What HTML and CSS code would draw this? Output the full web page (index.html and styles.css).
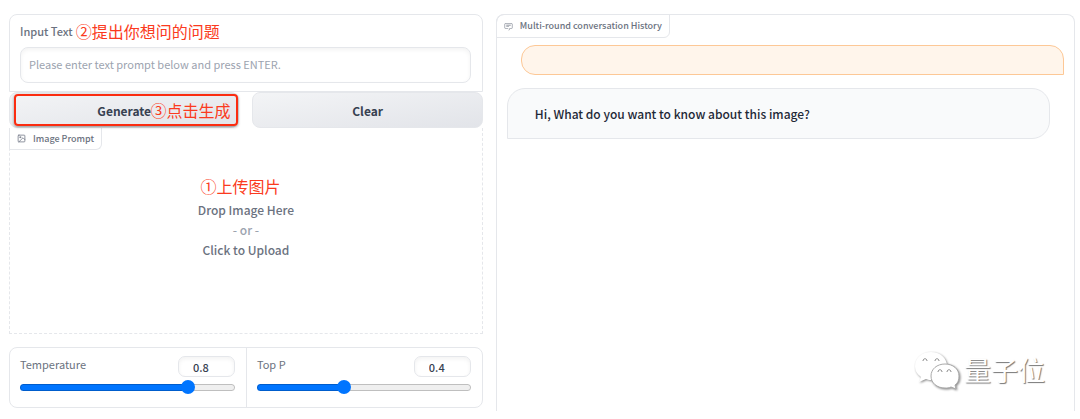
FILE: index.html
```html
<!DOCTYPE html>
<html lang="en">
<head>
    <meta charset="UTF-8">
    <meta name="viewport" content="width=device-width, initial-scale=1.0">
    <title>Image Chat</title>
    <link rel="stylesheet" href="styles.css">
</head>
<body>
    <main class="app">
        <div class="controls">
            <div class="text-panel">
                <div class="label-row">
                    <label for="prompt">Input Text</label>
                    <span class="note" lang="zh-CN">②提出你想问的问题</span>
                </div>
                <input type="text" id="prompt" class="prompt" placeholder="Please enter text prompt below and press ENTER.">
            </div>

            <div class="buttons">
                <div class="generate">
                    <button type="button">Generate</button>
                    <div class="highlight"><span class="note" lang="zh-CN">③点击生成</span></div>
                </div>
                <button type="button">Clear</button>
            </div>

            <div class="upload">
                <div class="tag upload-tag">
                    <svg class="tag-icon" viewBox="0 0 24 24" fill="none" stroke="currentColor" stroke-width="2" stroke-linecap="round" stroke-linejoin="round">
                        <rect x="3" y="3" width="18" height="18" rx="2"/>
                        <circle cx="8.5" cy="8.5" r="1.5"/>
                        <path d="M21 15l-5-5L5 21"/>
                    </svg>
                    Image Prompt
                </div>
                <button type="button" class="drop">
                    <span class="note" lang="zh-CN">①上传图片</span>
                    <span>Drop Image Here</span>
                    <span class="or">- or -</span>
                    <span>Click to Upload</span>
                </button>
            </div>

            <div class="sliders">
                <div class="slider">
                    <div class="slider-head">
                        <label for="temperature">Temperature</label>
                        <input type="text" inputmode="decimal" class="number" value="0.8" aria-label="Temperature value">
                    </div>
                    <input type="range" id="temperature" min="0" max="1" step="0.1" value="0.8" style="--value: 80%">
                </div>
                <div class="slider">
                    <div class="slider-head">
                        <label for="top-p">Top P</label>
                        <input type="text" inputmode="decimal" class="number" value="0.4" aria-label="Top P value">
                    </div>
                    <input type="range" id="top-p" min="0" max="1" step="0.1" value="0.4" style="--value: 40%">
                </div>
            </div>
        </div>

        <div class="chat">
            <div class="tag chat-tag">
                <svg class="tag-icon" viewBox="0 0 32 32" fill="currentColor">
                    <path d="M17.74 30L16 29l4-7h6a2 2 0 0 0 2-2V8a2 2 0 0 0-2-2H6a2 2 0 0 0-2 2v12a2 2 0 0 0 2 2h9v2H6a4 4 0 0 1-4-4V8a4 4 0 0 1 4-4h20a4 4 0 0 1 4 4v12a4 4 0 0 1-4 4h-4.84z"/>
                    <path d="M8 10h16v2H8zM8 16h10v2H8z"/>
                </svg>
                Multi-round conversation History
            </div>
            <div class="messages">
                <div class="message user"></div>
                <div class="message bot">Hi, What do you want to know about this image?</div>
            </div>
        </div>
    </main>

    <div class="watermark" lang="zh-CN">
        <svg class="watermark-icon" viewBox="0 0 46 40" fill="#fff">
            <path d="M17 2C8 2 1 8 1 16c0 5 2 8 6 11l-2 5 7-3c2 1 4 1 6 1 8 0 15-6 15-14S26 2 17 2z"/>
            <path class="front-bubble" d="M31 14c-8 0-14 5-14 12s6 12 14 12c2 0 4 0 6-1l5 2-1-4c3-2 4-5 4-9 0-7-6-12-14-12z"/>
            <path class="eyes" d="M9 11c0-3 4-3 4 0M21 11c0-3 4-3 4 0M24 22c0-3 4-3 4 0M33 22c0-3 4-3 4 0"/>
        </svg>
        量子位
    </div>

    <script>
        document.querySelectorAll('.slider').forEach((slider) => {
            const range = slider.querySelector('input[type="range"]');
            const number = slider.querySelector('.number');
            range.addEventListener('input', () => {
                number.value = range.value;
                range.style.setProperty('--value', range.value * 100 + '%');
            });
        });
    </script>
</body>
</html>
```
FILE: styles.css
```css
* {
    box-sizing: border-box;
}
body {
    margin: 0;
    background: white;
    color: #6b7280;
    font-family: "Noto Sans CJK SC", "Open Sans", sans-serif;
    font-size: 12px;
    font-weight: 500;
    line-height: 16px;
}
button, input {
    font-family: inherit;
    font-weight: inherit;
    margin: 0;
}
.app {
    display: grid;
    grid-template-columns: 9fr 11fr;
    gap: 13px;
    min-height: 100vh;
    padding: 14px 5px 8px 9px;
}
.controls {
    display: flex;
    flex-direction: column;
}
.text-panel {
    border: 1px solid #e5e7eb;
    border-radius: 8px 8px 0 0;
    padding: 8px 11px 8px 10px;
}
.label-row {
    display: flex;
    align-items: center;
    gap: 3px;
    height: 16px;
    margin-bottom: 8px;
    font-size: 11px;
}
.note {
    color: #fb3a20;
    font-size: 16px;
    font-weight: 400;
    line-height: 20px;
    white-space: nowrap;
}
.prompt {
    display: block;
    width: 100%;
    height: 36px;
    padding: 0 8px 2px;
    border: 1px solid #e5e7eb;
    border-radius: 8px;
    font-size: 11px;
    font-weight: 400;
    color: #374151;
    box-shadow: inset 0 2px 4px rgba(0, 0, 0, 0.05);
}
.prompt::placeholder {
    color: #9ca3af;
}
.buttons {
    display: grid;
    grid-template-columns: 1fr 1fr;
    gap: 13px;
}
.generate {
    position: relative;
}
.buttons button {
    display: block;
    width: 100%;
    height: 36px;
    border: 1px solid #e5e7eb;
    border-radius: 8px;
    background: linear-gradient(to bottom right, #f3f4f6, #e2e4e9);
    color: #374151;
    font-size: 12px;
    font-weight: bold;
    cursor: pointer;
}
.highlight {
    position: absolute;
    inset: 2px 1px 2px 5px;
    display: flex;
    align-items: center;
    justify-content: flex-end;
    padding-right: 6px;
    border: 2px solid #fb2c10;
    border-radius: 4px;
    box-shadow: 0 1px 3px rgba(0, 0, 0, 0.4);
    pointer-events: none;
}
.upload {
    display: flex;
    flex-direction: column;
    height: 206px;
    border: 1px dashed #e5e7eb;
    border-top: none;
}
.tag {
    display: flex;
    align-items: center;
    align-self: flex-start;
    gap: 7px;
    height: 22px;
    padding: 0 7px;
    border: 1px solid #e5e7eb;
    border-radius: 0 0 6px 0;
    font-size: 9px;
}
.upload-tag {
    margin-left: -1px;
    border-top: none;
}
.chat-tag {
    margin: -1px 0 0 -1px;
    border-radius: 8px 0 6px 0;
    height: 24px;
}
.tag-icon {
    width: 9px;
    height: 9px;
}
.drop {
    flex: 1;
    display: flex;
    flex-direction: column;
    align-items: center;
    padding: 26px 0 0;
    border: none;
    background: none;
    color: #6b7280;
    font-size: 12px;
    line-height: 20px;
    cursor: pointer;
}
.drop .note {
    margin: 0 11px 4px 0;
}
.or {
    color: #9ca3af;
}
.sliders {
    display: grid;
    grid-template-columns: 1fr 1fr;
    margin-top: 13px;
    border: 1px solid #e5e7eb;
    border-radius: 8px;
}
.slider {
    padding: 8px 11px 13px 10px;
}
.slider + .slider {
    border-left: 1px solid #e5e7eb;
}
.slider-head {
    display: flex;
    justify-content: space-between;
    font-size: 11px;
    font-weight: 400;
    margin-bottom: 3px;
}
.number {
    width: 57px;
    height: 21px;
    padding: 0 14px;
    border: 1px solid #e5e7eb;
    border-radius: 7px;
    color: #374151;
    font-size: 11px;
    font-weight: 500;
    box-shadow: inset 0 2px 4px rgba(0, 0, 0, 0.05);
}
input[type="range"] {
    -webkit-appearance: none;
    appearance: none;
    display: block;
    width: 100%;
    height: 14px;
    background: none;
}
input[type="range"]::-webkit-slider-runnable-track {
    height: 7px;
    border-radius: 4px;
    background: linear-gradient(#0075ff, #0075ff) 0 0 / var(--value) 100% no-repeat #efefef;
    box-shadow: inset 0 0 0 1px rgba(0, 0, 0, 0.2);
}
input[type="range"]::-webkit-slider-thumb {
    -webkit-appearance: none;
    width: 14px;
    height: 14px;
    margin-top: -4px;
    border-radius: 50%;
    background: #0075ff;
}
.chat {
    display: flex;
    flex-direction: column;
    border: 1px solid #e5e7eb;
    border-bottom: none;
    border-radius: 8px 8px 0 0;
}
.messages {
    display: flex;
    flex-direction: column;
    gap: 13px;
    padding: 7px 10px;
}
.message {
    border: 1px solid #e5e7eb;
    font-size: 12px;
    line-height: 20px;
    color: #1f2937;
}
.user {
    height: 30px;
    margin-left: 14px;
    border-color: #fdc896;
    border-radius: 14px 14px 0 14px;
    background: #fff5eb;
}
.bot {
    margin-right: 14px;
    padding: 15px 27px 14px;
    border-radius: 18px 18px 18px 0;
    background: #f9fafb;
}
.watermark {
    position: absolute;
    right: 35px;
    bottom: 29px;
    display: flex;
    align-items: center;
    gap: 4px;
    color: white;
    font-size: 27px;
    font-weight: 400;
    line-height: 40px;
    text-shadow: 1px 1px 1px #777;
}
.watermark-icon {
    width: 46px;
    height: 40px;
    filter: drop-shadow(1px 1px 1px #888);
}
.front-bubble {
    stroke: #aaa;
}
.eyes {
    fill: none;
    stroke: #888;
}
```
